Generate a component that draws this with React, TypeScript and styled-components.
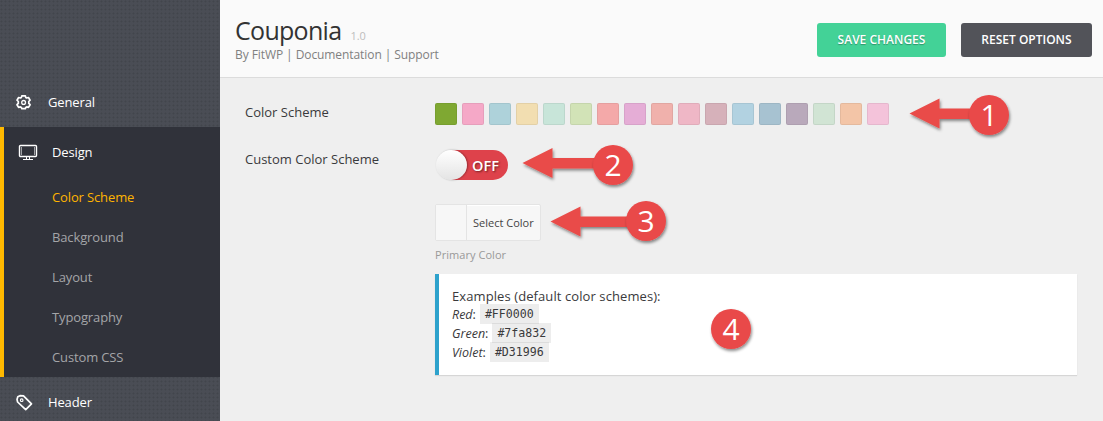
import React from "react";
import styled, { createGlobalStyle } from "styled-components";

const GlobalStyle = createGlobalStyle`
  * { box-sizing: border-box; }
  body { margin: 0; background: #efefef; font-family: "Open Sans", sans-serif; font-size: 13px; color: #3a3a3c; }
`;

const Page = styled.div`
  display: flex;
  position: relative;
  width: 1103px;
  height: 421px;
  overflow: hidden;
`;

const Sidebar = styled.nav`
  width: 220px;
  height: 421px;
  padding-top: 77px;
  overflow: hidden;
  background-color: #4a4d55;
  background-image: radial-gradient(circle at 1.5px 1.5px, #42454c 0.8px, transparent 1.2px);
  background-size: 4px 4px;
  letter-spacing: -0.13px;
`;

const NavItem = styled.div<{ $open?: boolean }>`
  display: flex;
  align-items: center;
  height: 50px;
  padding-left: ${(p) => (p.$open ? 12 : 14)}px;
  color: #fff;
  svg { width: 22px; height: 20px; margin-right: ${(p) => (p.$open ? 14 : 12)}px; }
`;

const NavGroup = styled.div`
  height: 250px;
  border-left: 4px solid #ffb900;
  background: #30323a;
`;

const SubItem = styled.div<{ $active?: boolean }>`
  height: 40px;
  padding-left: 48px;
  line-height: 40px;
  color: ${(p) => (p.$active ? "#ffb400" : "#a4a5a8")};
`;

const Main = styled.main`
  flex: 1;
`;

const Header = styled.header`
  display: flex;
  justify-content: space-between;
  height: 78px;
  padding: 13px 11px 0 15px;
  background: #fafafa;
  border-bottom: 1px solid #dcdcdc;
`;

const Title = styled.h1`
  margin: 0;
  font-size: 25px;
  font-weight: 400;
  line-height: 34px;
  letter-spacing: -0.7px;
  color: #333;
`;

const Version = styled.span`
  margin-left: 9px;
  font-size: 11px;
  letter-spacing: 0;
  color: #bdbdbd;
`;

const Byline = styled.div`
  margin-top: -5px;
  font-size: 12px;
  line-height: 14px;
  letter-spacing: -0.08px;
  color: #808080;
`;

const Actions = styled.div`
  display: flex;
  gap: 15px;
  padding-top: 10px;
`;

const Button = styled.button<{ $primary?: boolean }>`
  width: ${(p) => (p.$primary ? 129 : 131)}px;
  height: 34px;
  padding: 0 0 2px;
  border: 0;
  border-radius: 3px;
  background: ${(p) => (p.$primary ? "#43d297" : "#525359")};
  color: #fff;
  font: 600 12px "Open Sans", sans-serif;
  text-shadow: ${(p) => (p.$primary ? "0 1px 1px rgba(0, 0, 0, 0.3)" : "none")};
`;

const Form = styled.div`
  padding: 25px 26px 0 25px;
`;

const Field = styled.div<{ $height: number }>`
  display: grid;
  grid-template-columns: 190px 1fr;
  height: ${(p) => p.$height}px;
`;

const Label = styled.div`
  line-height: 18px;
`;

const Swatches = styled.div`
  display: flex;
  gap: 5px;
`;

const Swatch = styled.span<{ $color: string }>`
  width: 22px;
  height: 22px;
  border: 1px solid rgba(0, 0, 0, 0.06);
  border-radius: 2px;
  background: ${(p) => p.$color};
`;

const Toggle = styled.div`
  display: flex;
  align-items: center;
  width: 72px;
  height: 30px;
  margin-left: 1px;
  border-radius: 15px;
  background: linear-gradient(90deg, transparent 15px, #de424b 15px);
  color: #fff;
  font-size: 14.5px;
  font-weight: 600;
  text-shadow: 1px 1px 2px rgba(0, 0, 0, 0.5);
`;

const Knob = styled.span`
  width: 31px;
  height: 30px;
  margin-right: 5px;
  border-radius: 50%;
  background: linear-gradient(#fff, #e4e4e4);
  box-shadow: 1px 0 2px rgba(0, 0, 0, 0.35);
`;

const Picker = styled.div`
  display: flex;
  width: 106px;
  height: 37px;
  border: 1px solid #e4e4e4;
  border-radius: 2px;
  background: #f7f7f7;
  box-shadow: inset 0 1px 0 #fff;
  font-size: 11px;
  line-height: 35px;
  color: #444;
`;

const PickerSample = styled.span`
  width: 31px;
  margin-right: 6px;
  border-right: 1px solid #e4e4e4;
  background: #f7f7f7;
`;

const Hint = styled.div`
  margin-top: 6px;
  font-size: 11px;
  line-height: 16px;
  letter-spacing: 0.05px;
  color: #999;
`;

const Note = styled.section`
  height: 101px;
  margin: 11px 0 0 190px;
  padding: 13px 13px 0;
  border-left: 4px solid #2ea2cc;
  background: #fff;
  box-shadow: 0 1px 1px rgba(0, 0, 0, 0.1);
  line-height: 19px;
`;

const NoteTitle = styled.div`
  height: 18px;
  letter-spacing: 0.09px;
`;

const Example = styled.div`
  display: flex;
  height: 19px;
  font-size: 12.5px;
  white-space: nowrap;
`;

const Code = styled.code`
  height: 20px;
  margin: -1px 0 0 4px;
  padding: 0 5px;
  background: rgba(0, 0, 0, 0.07);
  font: 11.6px/21px "DejaVu Sans Mono", monospace;
`;

const Overlay = styled.svg`
  position: absolute;
  inset: 0;
  pointer-events: none;
  text { font: 30px "Open Sans", sans-serif; fill: #fff; text-anchor: middle; }
`;

const colors = [
  "#7fa832", "#f5a8c7", "#aed2da", "#f2deb1", "#c8e5d9", "#d2e3b7", "#f4a9a9", "#e5add6", "#f0b1ac",
  "#efb7c6", "#d6b1ba", "#b2d2e1", "#a7c2d1", "#b9a9bb", "#d1e4d4", "#f3c5a7", "#f4c3da",
];

const subItems = ["Color Scheme", "Background", "Layout", "Typography", "Custom CSS"];
const examples = [["Red", "#FF0000"], ["Green", "#7fa832"], ["Violet", "#D31996"]];
const markers = [
  { n: 1, x: 989, y: 115, tip: 909.5, ay: 113.5 },
  { n: 2, x: 613, y: 165, tip: 522.5, ay: 163 },
  { n: 3, x: 646, y: 221, tip: 550.5, ay: 221.5 },
  { n: 4, x: 731, y: 329 },
];

const GearIcon = () => (
  <svg viewBox="0 0 22 20" fill="none" stroke="#fff" strokeWidth="1.7" strokeLinejoin="round">
    <path d="M7.8 3.9h3.6l.3 1.5 1 .6 1.8-.5 1.6 2.7-1.3 1.3v1.9l1.3 1.3-1.6 2.7-1.8-.5-1 .6-.3 1.2H7.8l-.4-1.2-1-.6-1.8.5L3 12.7l1.3-1.3V9.5L3 8.2l1.6-2.7 1.8.5 1-.6z" />
    <circle cx="9.6" cy="10.4" r="1.9" strokeWidth="1.3" />
  </svg>
);

const MonitorIcon = () => (
  <svg viewBox="0 0 22 20" fill="none" stroke="#fff">
    <rect x="3.5" y="3.5" width="17" height="11" rx="1" strokeWidth="1.4" />
    <path d="M5.5 5v8M18.5 5v8" strokeOpacity=".55" />
    <path d="M10.5 15v2.5M13.5 15v2.5M7 17.5h10" />
  </svg>
);

const TagIcon = () => (
  <svg viewBox="0 0 22 20" fill="none" stroke="#fff" strokeWidth="1.7" strokeLinejoin="round">
    <path d="M3 7.4 3.8 4.8 6 3.7 9.5 3.9 17.5 11.8 11.7 17.6 3.6 10z" />
    <circle cx="7.7" cy="8.2" r="1.3" strokeWidth="1.1" />
  </svg>
);

export default function App() {
  return (
    <>
      <GlobalStyle />
      <Page>
        <Sidebar>
          <NavItem><GearIcon />General</NavItem>
          <NavGroup>
            <NavItem $open><MonitorIcon />Design</NavItem>
            {subItems.map((s, i) => <SubItem key={s} $active={i === 0}>{s}</SubItem>)}
          </NavGroup>
          <NavItem><TagIcon />Header</NavItem>
        </Sidebar>
        <Main>
          <Header>
            <div>
              <Title>Couponia<Version>1.0</Version></Title>
              <Byline>By FitWP | Documentation | Support</Byline>
            </div>
            <Actions>
              <Button $primary>SAVE CHANGES</Button>
              <Button>RESET OPTIONS</Button>
            </Actions>
          </Header>
          <Form>
            <Field $height={47}>
              <Label>Color Scheme</Label>
              <Swatches>{colors.map((c) => <Swatch key={c} $color={c} />)}</Swatches>
            </Field>
            <Field $height={54}>
              <Label>Custom Color Scheme</Label>
              <Toggle><Knob />OFF</Toggle>
            </Field>
            <Field $height={59}>
              <span />
              <div>
                <Picker><PickerSample />Select Color</Picker>
                <Hint>Primary Color</Hint>
              </div>
            </Field>
            <Note>
              <NoteTitle>Examples (default color schemes):</NoteTitle>
              {examples.map(([name, code]) => (
                <Example key={name}><em>{name}</em>:<Code>{code}</Code></Example>
              ))}
            </Note>
          </Form>
        </Main>
        <Overlay width="1103" height="421">
          <defs>
            <filter id="drop" x="-20%" y="-20%" width="140%" height="160%">
              <feDropShadow dx="1" dy="2" stdDeviation="1.5" floodOpacity="0.45" />
            </filter>
          </defs>
          {markers.map(({ n, x, y, tip, ay }) => (
            <g key={n}>
              {tip !== undefined && (
                <path
                  d={`M${tip} ${ay}l30-15v10H${x - 10}v10.5H${tip + 30}v9.5z`}
                  fill="#e94b48"
                  filter="url(#drop)"
                />
              )}
              <circle cx={x} cy={y} r="20" fill="#e94848" filter="url(#drop)" />
              <text x={x} y={y + 10.5}>{n}</text>
            </g>
          ))}
        </Overlay>
      </Page>
    </>
  );
}
